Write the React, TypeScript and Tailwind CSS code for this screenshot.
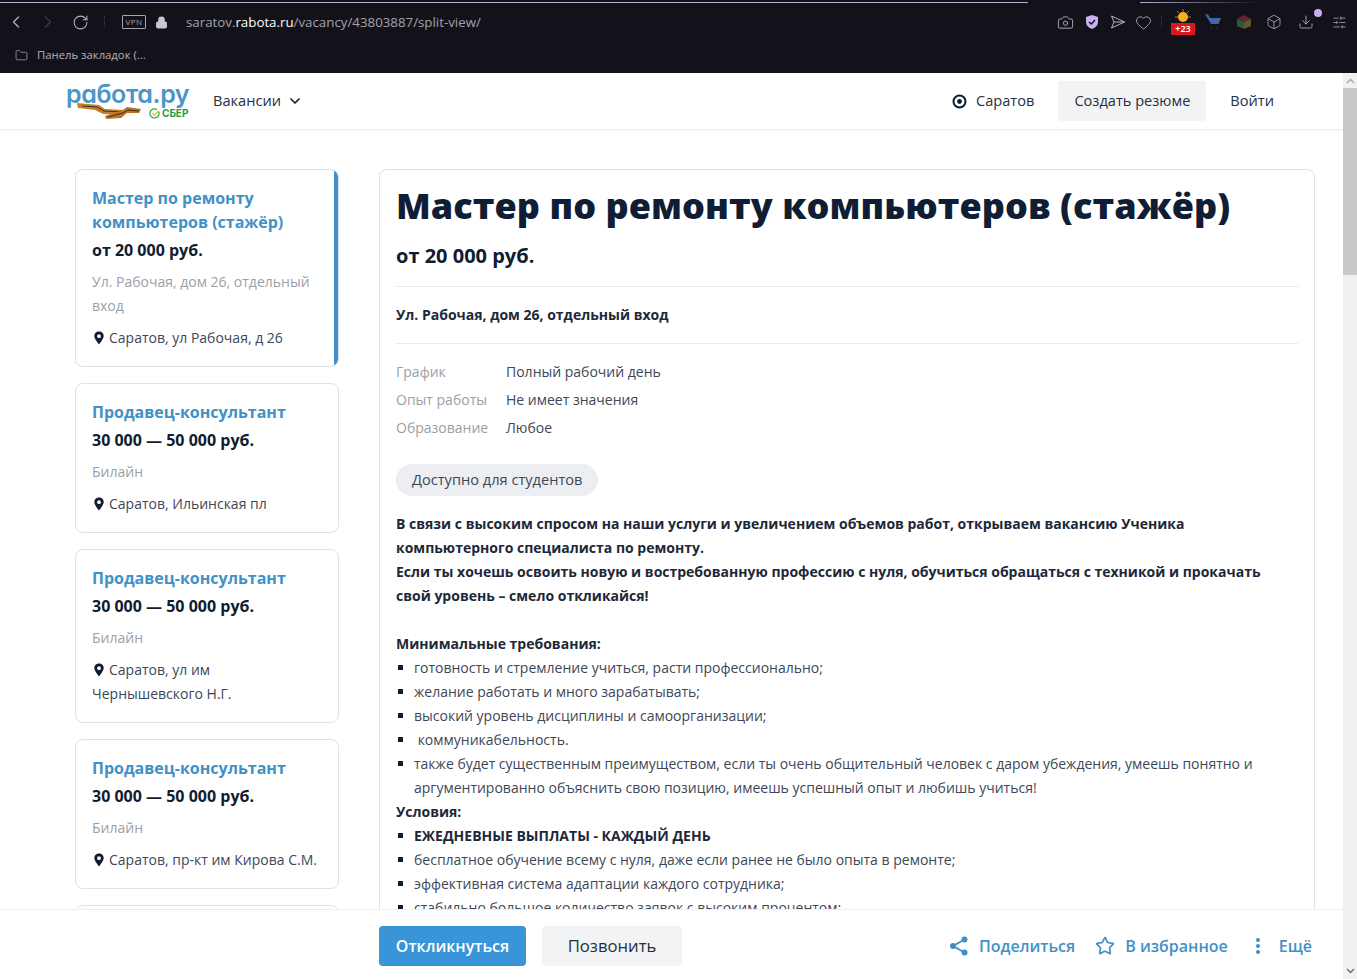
import { Box, Camera, ChevronDown, ChevronLeft, ChevronRight, Download, Folder, Heart, Lock, RotateCw, SlidersHorizontal, Star } from 'lucide-react'

type Job = {
  title: string[]
  salary: string
  company: string[]
  address: string[]
  active?: boolean
}

const jobs: Job[] = [
  {
    title: ['Мастер по ремонту', 'компьютеров (стажёр)'],
    salary: 'от 20 000 руб.',
    company: ['Ул. Рабочая, дом 26, отдельный', 'вход'],
    address: ['Саратов, ул Рабочая, д 26'],
    active: true,
  },
  { title: ['Продавец-консультант'], salary: '30 000 — 50 000 руб.', company: ['Билайн'], address: ['Саратов, Ильинская пл'] },
  { title: ['Продавец-консультант'], salary: '30 000 — 50 000 руб.', company: ['Билайн'], address: ['Саратов, ул им', 'Чернышевского Н.Г.'] },
  { title: ['Продавец-консультант'], salary: '30 000 — 50 000 руб.', company: ['Билайн'], address: ['Саратов, пр-кт им Кирова С.М.'] },
  { title: ['Продавец-консультант'], salary: '30 000 — 50 000 руб.', company: ['Билайн'], address: ['Саратов'] },
]

const info = [
  ['График', 'Полный рабочий день'],
  ['Опыт работы', 'Не имеет значения'],
  ['Образование', 'Любое'],
]

function PinIcon() {
  return (
    <svg width="12" height="14" viewBox="0 0 12 14" className="mr-[4px] inline-block align-[-2px]">
      <path fillRule="evenodd" fill="#101c30" d="M6 0.5C3.2 0.5 1.3 2.6 1.3 5.1 1.3 8.2 6 13.5 6 13.5S10.7 8.2 10.7 5.1C10.7 2.6 8.8 0.5 6 0.5ZM6 3.3A1.9 1.9 0 1 1 6 7.1 1.9 1.9 0 0 1 6 3.3Z" />
    </svg>
  )
}

function JobCard({ job }: { job: Job }) {
  return (
    <div className="relative shrink-0 overflow-hidden rounded-lg border border-[#dfe1e5] bg-white px-4 pb-4 pt-4">
      {job.active && <div className="absolute bottom-0 right-0 top-0 w-1 bg-[#3f90cd]" />}
      <div className="text-base font-bold leading-6 text-[#4191c6]">
        {job.title.map(t => <div key={t}>{t}</div>)}
      </div>
      <div className="mt-1 text-base font-bold leading-6 text-[#101c30]">{job.salary}</div>
      <div className="mt-2 text-sm leading-6 text-[#9a9fa8]">
        {job.company.map(t => <div key={t}>{t}</div>)}
      </div>
      <div className="mt-2 text-sm leading-6 text-[#3d4757]">
        {job.address.map((t, i) => (
          <div key={t} className={i === 0 ? 'pl-[1px]' : ''}>
            {i === 0 && <PinIcon />}
            {t}
          </div>
        ))}
      </div>
    </div>
  )
}

function Bullet({ children, bold }: { children: React.ReactNode; bold?: boolean }) {
  return (
    <li className={`flex ${bold ? 'font-bold text-[#1d2839]' : ''}`}>
      <span className="ml-[2px] mr-[11px] mt-[9px] size-[5px] shrink-0 bg-[#101c30]" />
      <span>{children}</span>
    </li>
  )
}

function Logo() {
  return (
    <div className="relative h-[46px] w-[124px]">
      <div className="absolute left-0 top-[-2px] font-['Inter',sans-serif] text-[25px] font-semibold leading-[36px] tracking-[-0.4px] text-[#4a96c8] [font-feature-settings:'cv11']">
        работа.ру
      </div>
      <svg width="80" height="20" viewBox="0 0 80 20" className="absolute left-[9px] top-[21px]">
        <path d="M2 4 L24 6 L30 10 L50 11 L48 16 L28 15 L20 11 L3 9Z" fill="#c4802f" />
        <path d="M7 7 L22 8 L29 12 L47 13" stroke="#4a2c14" strokeWidth="1" fill="none" />
        <path d="M30 17 L48 11 L52 8 L66 10 L64 14 L52 14 L46 19 L31 20Z" fill="#b87528" />
        <path d="M33 18 L48 14 L53 11 L64 12" stroke="#4a2c14" strokeWidth="1" fill="none" />
      </svg>
      <div className="absolute left-[83px] top-[29px] flex items-center gap-[2px]">
        <svg width="11" height="11" viewBox="0 0 12 12" fill="none">
          <path d="M10.6 4A5 5 0 1 1 8.8 1.8" stroke="#27a84a" strokeWidth="1.3" />
          <path d="M3.6 5.6 6 7.8 10.8 2.8" stroke="#e0bb1f" strokeWidth="1.3" />
        </svg>
        <span className="font-['Inter',sans-serif] text-[10px] font-bold leading-3 text-[#1f9e3f]">СБЕР</span>
      </div>
    </div>
  )
}

function BrowserBar() {
  return (
    <div className="h-[73px] shrink-0 bg-[#13121a] font-['Open_Sans',sans-serif]">
      <div className="flex h-[3px] items-end">
        <div className="h-px w-[1028px] bg-[#b7aed0]" />
        <div className="ml-[112px] h-px w-[120px] bg-gradient-to-r from-[#b7aed0] to-transparent" />
      </div>
      <div className="flex h-[38px] items-center pl-[6px] pr-[10px]">
        <ChevronLeft size={20} strokeWidth={1.5} className="text-[#b4b3bb]" />
        <ChevronRight size={20} strokeWidth={1.5} className="ml-[12px] text-[#3e3d46]" />
        <RotateCw size={17} strokeWidth={1.5} className="ml-[14px] text-[#b4b3bb]" />
        <div className="ml-[15px] h-3 w-px border-l border-dotted border-[#3e3d46]" />
        <div className="ml-[17px] flex h-[14px] w-[24px] items-center justify-center rounded-[1px] border border-[#a5a4ad] text-[8px] leading-none tracking-[0.5px] text-[#a5a4ad]">
          VPN
        </div>
        <Lock size={13} strokeWidth={2} fill="#c9c8d0" className="ml-[9px] text-[#c9c8d0]" />
        <div className="ml-[18px] pt-[1px] text-[13.3px] text-[#a3a2ab]">
          saratov.<span className="text-white">rabota.ru</span>/vacancy/43803887/split-view/
        </div>
        <div className="ml-auto flex items-center">
          <Camera size={17} strokeWidth={1.3} className="text-[#b4b3bb]" />
          <svg width="16" height="16" viewBox="0 0 16 16" className="ml-[10px]">
            <path d="M8 1 14 3V8C14 11.5 11 14 8 15 5 14 2 11.5 2 8V3Z" fill="#c9aef0" />
            <path d="M5 8 7.3 10 11 6" stroke="#13121a" strokeWidth="1.5" fill="none" />
          </svg>
          <svg width="17" height="16" viewBox="0 0 16 16" fill="none" className="ml-[9px]">
            <path d="M2 2 15 8 2 14 4.5 8Z M4.5 8H15" stroke="#b4b3bb" strokeWidth="1" strokeLinejoin="round" />
          </svg>
          <Heart size={17} strokeWidth={1.2} className="ml-[9px] text-[#b4b3bb]" />
          <div className="ml-[9px] h-3 w-px border-l border-dotted border-[#3e3d46]" />
          <div className="relative ml-[9px] h-[26px] w-6">
            <svg width="16" height="16" viewBox="0 0 16 16" className="absolute left-[4px] top-0">
              <circle cx="8" cy="8" r="5" fill="#f5b120" />
              <path d="M8 0V3M2 2 4 4M14 2 12 4M0 8H3M16 8H13" stroke="#a8802a" strokeWidth="1" />
            </svg>
            <div className="absolute bottom-0 left-0 w-6 bg-[#d9171e] text-center text-[9px] font-semibold leading-[12px] text-white">+23</div>
          </div>
          <svg width="18" height="18" viewBox="0 0 18 18" className="ml-[9px]">
            <path d="M1 1 4 1.5 6 5H17L14.5 11H7Z" fill="#3e68a8" />
            <circle cx="7" cy="15" r="1" fill="#2a2a33" />
            <circle cx="13" cy="15" r="1" fill="#2a2a33" />
          </svg>
          <svg width="16" height="16" viewBox="0 0 16 16" className="ml-[14px]">
            <path d="M8 1 15 5 8 8 1 5Z" fill="#5f2530" />
            <path d="M1 5 8 8V15L1 12Z" fill="#2c5a40" />
            <path d="M15 5 8 8V15L15 12Z" fill="#5e5a30" />
          </svg>
          <Box size={16} strokeWidth={1.2} className="ml-[14px] text-[#b4b3bb]" />
          <div className="relative ml-[16px]">
            <Download size={16} strokeWidth={1.3} className="text-[#b4b3bb]" />
            <div className="absolute -right-[8px] -top-[5px] size-2 rounded-full bg-[#c9aef0]" />
          </div>
          <SlidersHorizontal size={15} strokeWidth={1.2} className="ml-[18px] text-[#b4b3bb]" />
        </div>
      </div>
      <div className="flex h-[28px] items-center pl-[15px] text-[11.3px] text-[#b4b3bb]">
        <Folder size={13} strokeWidth={1.3} />
        <span className="ml-[9px]">Панель закладок (...</span>
      </div>
    </div>
  )
}

function Scrollbar() {
  return (
    <div className="flex w-[14px] shrink-0 flex-col bg-[#f1f1f1]">
      <div className="flex h-[15px] items-center justify-center">
        <svg width="9" height="6" viewBox="0 0 9 6" fill="none"><path d="M1 5 4.5 1.5 8 5" stroke="#b0b0b0" strokeWidth="1.6" /></svg>
      </div>
      <div className="h-[187px] bg-[#c9c9c9]" />
      <div className="mb-[1px] mt-auto flex h-[14px] items-center justify-center">
        <svg width="9" height="6" viewBox="0 0 9 6" fill="none"><path d="M1 1 4.5 4.5 8 1" stroke="#6e6e6e" strokeWidth="1.4" /></svg>
      </div>
    </div>
  )
}

export default function App() {
  return (
    <div className="flex h-[979px] w-[1357px] flex-col overflow-hidden bg-white font-['Open_Sans',sans-serif]">
      <BrowserBar />
      <div className="flex min-h-0 flex-1">
        <div className="flex min-w-0 flex-1 flex-col">
          {/* header */}
          <header className="flex h-[57px] shrink-0 items-center border-b border-[#eeeff1] pl-[66px] pr-[69px] shadow-[0_1px_3px_rgba(0,0,0,0.04)]">
            <Logo />
            <div className="ml-[23px] flex items-center text-[14.6px] text-[#253041]">
              Вакансии
              <ChevronDown size={16} strokeWidth={2.5} className="ml-[6px] text-[#101c30]" />
            </div>
            <div className="ml-auto flex items-center text-[14.6px] text-[#253041]">
              <svg width="15" height="15" viewBox="0 0 15 15" fill="none" className="mr-[9px]">
                <circle cx="7.5" cy="7.5" r="6" stroke="#101c30" strokeWidth="2" />
                <circle cx="7.5" cy="7.5" r="2.4" fill="#101c30" />
              </svg>
              Саратов
              <div className="ml-[24px] flex h-10 w-[148px] items-center justify-center rounded bg-[#f2f3f4]">Создать резюме</div>
              <div className="ml-[24px]">Войти</div>
            </div>
          </header>

          {/* content */}
          <div className="flex min-h-0 flex-1 gap-10 overflow-hidden pl-[75px] pr-[28px] pt-[39px]">
            <aside className="flex w-[264px] shrink-0 flex-col gap-4">
              {jobs.map((job, i) => <JobCard key={i} job={job} />)}
            </aside>
            <main className="min-w-0 flex-1 self-start rounded-lg border border-[#dfe1e5] px-4 pt-[9px] text-sm leading-6 text-[#3d4757]">
              <h1 className="text-[36px] font-extrabold leading-[54px] tracking-[0.05px] text-[#0f1d35]">Мастер по ремонту компьютеров (стажёр)</h1>
              <div className="mt-[8px] pb-[15px] text-xl font-bold leading-[30px] text-[#101c30]">от 20 000 руб.</div>
              <div className="border-y border-[#e9eaec] py-4 font-bold text-[#1d2839]">Ул. Рабочая, дом 26, отдельный вход</div>
              <div className="mt-[14px] leading-7">
                {info.map(([k, v]) => (
                  <div key={k} className="flex">
                    <div className="w-[110px] text-[#9a9fa8]">{k}</div>
                    <div>{v}</div>
                  </div>
                ))}
              </div>
              <div className="mt-[22px] inline-block rounded-full bg-[#eceef1] px-4 pb-[5px] pt-[3px] align-top text-[14.6px]">Доступно для студентов</div>
              <div className="mt-4 font-bold text-[#1d2839]">
                В связи с высоким спросом на наши услуги и увеличением объемов работ, открываем вакансию Ученика компьютерного специалиста по ремонту.
                <br />
                Если ты хочешь освоить новую и востребованную профессию с нуля, обучиться обращаться с техникой и прокачать свой уровень – смело откликайся!
              </div>
              <div className="mt-6 font-bold text-[#1d2839]">Минимальные требования:</div>
              <ul>
                <Bullet>готовность и стремление учиться, расти профессионально;</Bullet>
                <Bullet>желание работать и много зарабатывать;</Bullet>
                <Bullet>высокий уровень дисциплины и самоорганизации;</Bullet>
                <Bullet>&nbsp;коммуникабельность.</Bullet>
                <Bullet>также будет существенным преимуществом, если ты очень общительный человек с даром убеждения, умеешь понятно и аргументированно объяснить свою позицию, имеешь успешный опыт и любишь учиться!</Bullet>
              </ul>
              <div className="font-bold text-[#1d2839]">Условия:</div>
              <ul>
                <Bullet bold>ЕЖЕДНЕВНЫЕ ВЫПЛАТЫ - КАЖДЫЙ ДЕНЬ</Bullet>
                <Bullet>бесплатное обучение всему с нуля, даже если ранее не было опыта в ремонте;</Bullet>
                <Bullet>эффективная система адаптации каждого сотрудника;</Bullet>
                <Bullet>стабильно большое количество заявок с высоким процентом;</Bullet>
              </ul>
            </main>
          </div>

          {/* bottom action bar */}
          <footer className="flex h-[70px] shrink-0 items-center border-t border-[#eeeff1] bg-white pl-[379px] pr-[31px] pt-[2px]">
            <div className="flex h-10 w-[147px] items-center justify-center rounded bg-[#3a94d8] text-base font-semibold text-white">Откликнуться</div>
            <div className="ml-4 flex h-10 w-[140px] items-center justify-center rounded bg-[#f2f3f4] text-[16.7px] text-[#253041]">Позвонить</div>
            <div className="ml-auto flex items-center text-base font-semibold text-[#4191c6]">
              <svg width="20" height="20" viewBox="0 0 20 20" fill="#3f90c6" className="mr-[10px]">
                <circle cx="15.5" cy="3.5" r="3" />
                <circle cx="4" cy="10" r="3" />
                <circle cx="15.5" cy="16.5" r="3" />
                <path d="M4 10 15.5 3.5M4 10 15.5 16.5" stroke="#3f90c6" strokeWidth="2" />
              </svg>
              Поделиться
              <Star size={20} strokeWidth={2} className="ml-[20px] mr-[10px] text-[#3f90c6]" />
              В избранное
              <svg width="4" height="16" viewBox="0 0 4 16" fill="#3f90c6" className="ml-[28px] mr-[19px]">
                <circle cx="2" cy="2" r="2" />
                <circle cx="2" cy="8" r="2" />
                <circle cx="2" cy="14" r="2" />
              </svg>
              Ещё
            </div>
          </footer>
        </div>
        <Scrollbar />
      </div>
    </div>
  )
}
